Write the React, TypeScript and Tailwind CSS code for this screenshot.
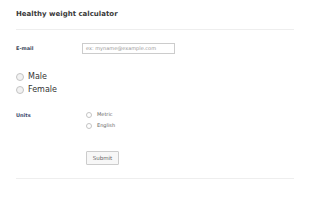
import React from "react";

function Radio({ size }: { size: "sm" | "lg" }) {
    return (
        <span
            className={
                size === "lg"
                    ? "inline-block w-[8px] h-[8px] rounded-full border border-[#c4c4c4] bg-[#f2f2f2]"
                    : "inline-block w-[6px] h-[6px] rounded-full border border-[#c4c4c4] bg-white"
            }
        />
    );
}

export default function App() {
    return (
        <div className="w-[310px] h-[200px] bg-white font-['DejaVu_Sans',sans-serif] text-[#333]">
            <div className="px-4 pt-[10px]">
                <h1 className="text-[7px] leading-[9px] font-bold text-[#3a3a3a]">Healthy weight calculator</h1>
                <div className="mt-[10px] border-t border-[#eee]" />

                {/* E-mail row */}
                <div className="flex items-center mt-[13px]">
                    <label className="w-[66px] text-[5px] font-bold text-[#3d4a5c]">E-mail</label>
                    <div className="w-[93px] h-[11px] border border-[#ccc] flex items-center px-[3px] text-[5px] text-[#999]">
                        ex: myname@example.com
                    </div>
                </div>

                {/* Gender */}
                <div className="mt-[19px] flex flex-col gap-[5px]">
                    <div className="flex items-center gap-[4px] text-[8px] leading-[8px] text-[#333]">
                        <Radio size="lg" />
                        <span>Male</span>
                    </div>
                    <div className="flex items-center gap-[4px] text-[8px] leading-[8px] text-[#333]">
                        <Radio size="lg" />
                        <span>Female</span>
                    </div>
                </div>

                {/* Units */}
                <div className="flex mt-[17px]">
                    <label className="w-[70px] text-[5px] font-bold text-[#3d4a6e] pt-[1px]">Units</label>
                    <div className="flex flex-col gap-[4px]">
                        <div className="flex items-center gap-[5px] text-[5px] leading-[7px] text-[#666]">
                            <Radio size="sm" />
                            <span>Metric</span>
                        </div>
                        <div className="flex items-center gap-[5px] text-[5px] leading-[7px] text-[#666]">
                            <Radio size="sm" />
                            <span>English</span>
                        </div>
                    </div>
                </div>

                {/* Submit */}
                <div className="pl-[70px] mt-[14px]">
                    <button className="w-[33px] h-[14px] border border-[#ccc] bg-[#f7f7f7] rounded-[1px] text-[5.5px] text-[#666]">
                        Submit
                    </button>
                </div>

                <div className="mt-[11px] border-t border-[#eee]" />
            </div>
        </div>
    );
}
